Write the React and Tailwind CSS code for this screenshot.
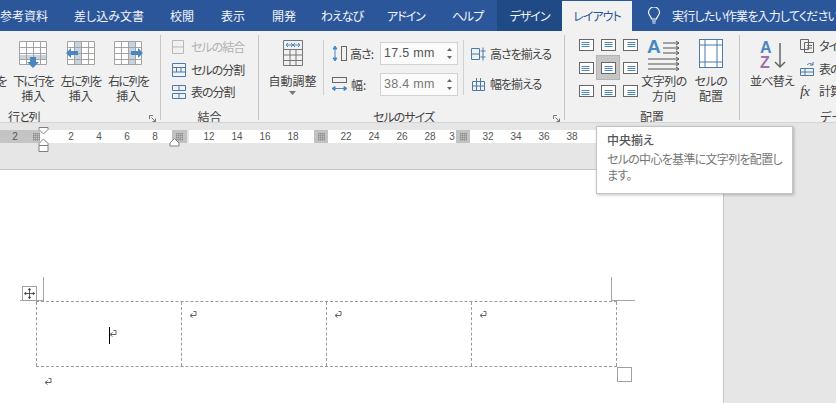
const tabs = [
  { label: '参考資料', w: 'w-[76px] -ml-[14px]' },
  { label: '差し込み文書', w: 'w-[94px]' },
  { label: '校閲', w: 'w-[52px]' },
  { label: '表示', w: 'w-[50px]' },
  { label: '開発', w: 'w-[52px]' },
  { label: 'わえなび', w: 'w-[64px] tracking-[-1px]' },
  { label: 'アドイン', w: 'w-[64px] tracking-[-1px]' },
  { label: 'ヘルプ', w: 'w-[59px] tracking-[-1px]' },
];

function TitleBar() {
  return (
    <div className="flex h-[31px] items-stretch overflow-hidden bg-[#2b579a] text-[12px] text-[#f4f6fa]">
      {tabs.map((t) => (
        <div key={t.label} className={`flex shrink-0 items-center justify-center ${t.w}`}>{t.label}</div>
      ))}
      <div className="flex w-[65px] shrink-0 items-center justify-center bg-[#1f4a85] tracking-[-1px]">デザイン</div>
      <div className="mt-px flex w-[70px] shrink-0 items-center justify-center bg-[#f1f1f1] tracking-[-1px] text-[#2b579a]">レイアウト</div>
      <svg width="14" height="18" viewBox="0 0 14 18" className="ml-[15px] mt-[7px] shrink-0" fill="none" stroke="#fff" strokeWidth="1.1">
        <path d="M4.5 12c0-2.5-3-3.500-3-6.500a5.500 5.500 0 0 1 11 0c0 3-3 4-3 6.500z" />
        <path d="M5 14h4M5.500 16h3" />
      </svg>
      <div className="ml-[11px] flex shrink-0 items-center whitespace-nowrap tracking-[-0.8px]">実行したい作業を入力してください</div>
    </div>
  );
}

function GridIcon({ shade, children }) {
  return (
    <svg width="30" height="28" viewBox="0 0 30 28" fill="none" className="shrink-0">
      <rect x="1" y="1" width="28" height="24" fill="#fff" />
      {shade}
      <path stroke="#a2a2a2" d="M1.500 1.500h27v23h-27zM1.500 7.500h27M1.500 13.500h27M1.500 19.500h27M8.500 1.500v23M15.500 1.500v23M22.500 1.500v23" />
      {children}
    </svg>
  );
}

const arrowBlue = '#4a86c0';

function BigButton({ icon, lines, className = 'w-[47px]', track = '' }) {
  return (
    <div className={`flex shrink-0 flex-col items-center ${className}`}>
      <div className="flex h-[38px] items-start justify-center pt-[5px]">{icon}</div>
      {lines.map((l, i) => (
        <div key={l} className={`h-[15px] whitespace-nowrap leading-[15px] ${i === 0 ? track : ''}`}>{l}</div>
      ))}
    </div>
  );
}

function Launcher() {
  return (
    <svg width="7" height="7" viewBox="0 0 7 7" fill="none" stroke="#777" className="absolute -bottom-[2px] right-[4px]">
      <path d="M.5 4V.5H4M2.500 2.500l4 4M6.500 3.500v3h-3" />
    </svg>
  );
}

function Group({ width, label, children, launcher, labelClass = 'justify-center' }) {
  return (
    <div className={`relative mt-[4px] flex h-[85px] shrink-0 flex-col border-r border-[#c6c6c6] ${width}`}>
      <div className="flex h-[70px] min-h-0">{children}</div>
      <div className={`-mb-[4px] mt-auto flex h-[15px] items-center whitespace-nowrap leading-[15px] ${labelClass}`}>{label}</div>
      {launcher && <Launcher />}
    </div>
  );
}

function SmallRow({ icon, text, muted }) {
  return (
    <div className={`flex h-[22.500px] items-center gap-[4px] whitespace-nowrap tracking-[-1px] ${muted ? 'text-[#b1b1b1]' : ''}`}>
      {icon}
      <span>{text}</span>
    </div>
  );
}

function CellIcon({ d, color = '#4a7ba8' }) {
  return (
    <svg width="15" height="14" viewBox="0 0 15 14" fill="none" stroke={color} className="shrink-0">
      <path d={d} />
    </svg>
  );
}

function Spin({ value, muted }) {
  return (
    <div className={`flex h-[23px] w-[78px] shrink-0 items-center justify-between border border-[#d2d2d2] bg-[#fbfbfb] pl-[3px] pr-[4px] font-['Liberation_Sans'] text-[12.500px] ${muted ? 'text-[#777]' : 'text-[#555]'}`}>
      <span className="tracking-[0.3px]">{value}</span>
      <svg width="7" height="15" viewBox="0 0 7 15" fill="#666">
        <path d="M3.500 2 6 5H1zM3.500 13 1 10h5z" />
      </svg>
    </div>
  );
}

function AlignIcon({ row, col, selected }) {
  const lines = [
    [3.500, 5.500, 7.500],
    [4.500, 6.500, 8.500],
    [5.500, 7.500, 9.500],
  ][row];
  const spans = ['M2.500 %h8', 'M3.500 %h8', 'M4.500 %h8'];
  return (
    <div className={`flex h-[23px] w-[22px] items-center justify-center ${selected ? 'bg-[#c6c6c6] outline outline-1 outline-[#b4b4b4]' : ''}`}>
      <svg width="15" height="12" viewBox="0 0 15 12" fill="none">
        <rect x=".5" y=".5" width="14" height="11" stroke="#666" fill="#fff" />
        {lines.map((y) => (
          <path key={y} stroke={arrowBlue} d={spans[col].replace('%', y)} />
        ))}
      </svg>
    </div>
  );
}

function InnerDivider() {
  return <div className="mt-[5px] h-[55px] w-px shrink-0 bg-[#d0d0d0]" />;
}

function Ribbon() {
  return (
    <div className="flex h-[92px] overflow-hidden border-b border-[#d4d4d4] bg-[#f1f1f1] text-[12px] text-[#444]">
      <Group width="w-[161px]" label={<span className="pl-[8px] tracking-[-1px]">行と列</span>} labelClass="justify-start" launcher>
        <div className="-ml-[38px] flex text-center">
          <BigButton lines={['上に行を', '挿入']} track="tracking-[-1.500px]" className="w-[47.500px]" icon={<GridIcon />} />
          <BigButton
            lines={['下に行を', '挿入']}
            track="tracking-[-1.500px]"
            className="w-[47.500px]"
            icon={
              <GridIcon shade={<rect x="1" y="15" width="28" height="5" fill="#c9d3e0" />}>
                <path d="M12 17h6v5h3l-6 6-6-6h3z" fill={arrowBlue} />
              </GridIcon>
            }
          />
          <BigButton
            lines={['左に列を', '挿入']}
            track="tracking-[-1.500px]"
            className="w-[47.500px]"
            icon={
              <GridIcon shade={<rect x="8" y="1" width="8" height="24" fill="#c9d3e0" />}>
                <path d="M0 13l5-5v3h7v4H5v3z" fill={arrowBlue} />
              </GridIcon>
            }
          />
          <BigButton
            lines={['右に列を', '挿入']}
            track="tracking-[-1.500px]"
            className="w-[47.500px]"
            icon={
              <GridIcon shade={<rect x="15" y="1" width="8" height="24" fill="#c9d3e0" />}>
                <path d="M30 13l-5-5v3h-7v4h7v3z" fill={arrowBlue} />
              </GridIcon>
            }
          />
        </div>
      </Group>

      <Group width="w-[98px]" label="結合">
        <div className="pl-[11px] pt-px">
          <SmallRow muted text="セルの結合" icon={<CellIcon color="#b8b8b8" d="M.5 .5h11v13H.5zM.5 7h11" />} />
          <SmallRow text="セルの分割" icon={<CellIcon d="M.5 .5h13v13H.5zM.5 4.500h13M.5 9h13M4.500 4.500V9M9 4.500V9" />} />
          <SmallRow text="表の分割" icon={<CellIcon d="M.5 .5h13v5H.5zM.5 8.500h13v5H.5zM7 .5v5M7 8.500v5" />} />
        </div>
      </Group>

      <Group width="w-[306px]" label={<span className="pr-[16px] tracking-[-1px]">セルのサイズ</span>} launcher>
        <div className="flex h-[70px]">
          <div className="flex h-[60px] w-[64px] shrink-0 flex-col items-center pl-[3px]">
            <div className="flex h-[38px] items-start pt-[5px]">
              <svg width="20" height="26" viewBox="0 0 20 26" fill="none" stroke="#777">
                <path d="M.5 .5h19v25H.5zM.5 9.500h19M.5 15h19M.5 20.500h19M7 9.500v16M13 9.500v16" />
                <path d="M3 5h14M3 5l2-2M3 5l2 2M17 5l-2-2M17 5l-2 2M8 3l4 4M12 3l-4 4" stroke={arrowBlue} />
              </svg>
            </div>
            <div className="h-[15px] leading-[15px]">自動調整</div>
            <svg width="7" height="4" viewBox="0 0 7 4" fill="#777" className="mt-[3px]"><path d="M0 0h7L3.500 4z" /></svg>
          </div>
          <InnerDivider />

          <div className="flex h-[61px] w-[139px] shrink-0 flex-col justify-between pl-[7px] pt-[7px]">
            <div className="flex items-center">
              <svg width="17" height="17" viewBox="0 0 17 17" fill="none" className="shrink-0">
                <path d="M4 4v9M4 1 2 4h4zM4 16l-2-3h4z" fill={arrowBlue} stroke={arrowBlue} />
                <rect x="10.500" y="1.500" width="5" height="14" stroke="#666" />
              </svg>
              <span className="ml-[2px] w-[30px] whitespace-nowrap tracking-[-1px]">高さ:</span>
              <Spin value="17.5 mm" />
            </div>
            <div className="flex items-center">
              <svg width="17" height="17" viewBox="0 0 17 17" fill="none" className="shrink-0">
                <path d="M4 12.500h9M1 12.500 4 10.500v4zM16 12.500l-3-2v4z" fill={arrowBlue} stroke={arrowBlue} />
                <rect x="1.500" y="1.500" width="14" height="5" stroke="#666" />
              </svg>
              <span className="ml-[3px] w-[29px] whitespace-nowrap">幅:</span>
              <Spin muted value="38.4 mm" />
            </div>
          </div>
          <InnerDivider />

          <div className="flex h-[60px] flex-col justify-between pb-[2px] pl-[7px] pt-[10px] tracking-[-1px]">
            <div className="flex items-center gap-[4px] whitespace-nowrap">
              <CellIcon d="M.5 1.500h8v11h-8zM.5 7h8M12 .5v13M9.500 4h5M9.500 10h5" />
              <span>高さを揃える</span>
            </div>
            <div className="flex items-center gap-[4px] whitespace-nowrap">
              <CellIcon d="M1.500 4.500h12v9h-12zM1.500 9h12M5.500 1v12M9.500 1v12" />
              <span>幅を揃える</span>
            </div>
          </div>
        </div>
      </Group>

      <Group width="w-[175px]" label="配置">
        <div className="flex pl-[10px]">
          <div className="-mt-[2px] grid h-[69px] grid-cols-[22px_22px_22px] grid-rows-[23px_23px_23px]">
            {[0, 1, 2].map((r) =>
              [0, 1, 2].map((c) => <AlignIcon key={`${r}${c}`} row={r} col={c} selected={r === 1 && c === 1} />)
            )}
          </div>
          <BigButton
            className="w-[46px]"
            track="tracking-[-0.5px]"
            lines={['文字列の', '方向']}
            icon={
              <svg width="34" height="33" viewBox="0 0 34 33" fill="none" className="-mt-[2px]">
                <text x="0" y="15" fontFamily="Liberation Sans" fontWeight="700" fontSize="19" fill={arrowBlue}>A</text>
                <path d="M16 5h16M16 10h16M16 15h16M1 21h31M1 26h31M1 31h31M29 3l3 2-3 2M29 8l3 2-3 2M29 13l3 2-3 2M29 19l3 2-3 2M29 24l3 2-3 2M29 29l3 2-3 2" stroke="#555" />
              </svg>
            }
          />
          <BigButton
            className="w-[48px]"
            track="tracking-[-0.5px]"
            lines={['セルの', '配置']}
            icon={
              <svg width="24" height="29" viewBox="0 0 24 29" fill="none" stroke="#4a7ba8" className="-mt-[1px]">
                <rect x=".5" y=".5" width="23" height="28" fill="#fff" />
                <path d="M.5 6h23M.5 23h23M6 .5v28M18 .5v28" />
              </svg>
            }
          />
        </div>
      </Group>

      <Group width="w-[100px]" label={<span className="pl-[80px]">データ</span>} labelClass="justify-start">
        <div className="flex pl-[7px]">
          <BigButton
            className="w-[50px]"
            track="tracking-[-0.8px]"
            lines={['並べ替え']}
            icon={
              <svg width="27" height="31" viewBox="0 0 27 31" fill="none" className="-mt-[1px]">
                <text x="1" y="14" fontFamily="Liberation Sans" fontWeight="700" fontSize="16" fill={arrowBlue}>A</text>
                <text x="1" y="29" fontFamily="Liberation Sans" fontWeight="700" fontSize="16" fill="#9e70ae">Z</text>
                <path d="M21 4v24M16 23l5 5 5-5" stroke="#666" strokeWidth="1.500" />
              </svg>
            }
          />
          <div className="ml-[3px] flex flex-col whitespace-nowrap">
            <SmallRow text="タイトル行" icon={<CellIcon color="#666" d="M.5 .5h8v10h-8zM4.500 3.500h9v10h-9zM7 6.500h5M7 9h5" />} />
            <SmallRow text="表の変換" icon={<CellIcon d="M.5 6.500h13v7H.5zM.5 10h13M5 6.500v7M7 3c2-2 4-2 6 0M13 0v3h-3" />} />
            <SmallRow text="計算式" icon={<span className="w-[15px] font-['Liberation_Serif'] text-[15px] italic leading-none">fx</span>} />
          </div>
        </div>
      </Group>
    </div>
  );
}

function Seg({ w, children, tone = 'bg-white' }) {
  return <div className={`flex h-full shrink-0 items-center justify-center ${w} ${tone}`}>{children}</div>;
}

function Nums({ list, tone }) {
  return list.map((n, i) => (
    <Seg key={i} w="w-[28px]" tone={tone}>{n}</Seg>
  ));
}

function Marker({ w = 'w-[14px]', tone = 'bg-[#c2c2c2]' }) {
  return (
    <Seg w={w} tone={tone}>
      <svg width="7" height="8" viewBox="0 0 7 8" stroke="#808080" strokeWidth=".5">
        <path d="M0 .5h7M0 2.500h7M0 4.500h7M0 6.500h7M.5 0v8M2.500 0v8M4.500 0v8M6.500 0v8" />
      </svg>
    </Seg>
  );
}

function Ruler() {
  return (
    <div className="relative h-[46px] bg-[#e6e6e6] pt-[7px]">
      <div className="flex h-[13px] items-center font-['Liberation_Sans'] text-[10px] text-[#555]">
        <Seg w="w-[32px]" tone="bg-[#c4c4c4]"><span className="pr-[2px]">2</span></Seg>
        <Marker w="w-[8px]" tone="bg-[#c4c4c4]" />
        <Seg w="w-[17px]" />
        <Nums list={[2, 4, 6, 8]} />
        <Seg w="w-[3px]" />
        <Marker w="w-[15px]" />
        <Seg w="w-[2px]" tone="bg-[#e6e6e6]" />
        <Seg w="w-[6px]" />
        <Nums list={[12, 14, 16, 18]} />
        <Seg w="w-[7px]" />
        <Marker />
        <Seg w="w-[4px]" />
        <Nums list={[22, 24, 26, 28]} />
        <Seg w="w-[12px]"><span className="pl-[4px]">3</span></Seg>
        <Marker />
        <Seg w="w-[4px]" />
        <Nums list={[32, 34, 36, 38]} />
        <Seg w="w-[137px]" />
      </div>
      <svg width="12" height="26" viewBox="0 0 12 26" fill="#fff" stroke="#808080" className="absolute left-[38px] top-[4px]">
        <path d="M1 .5h9v2L5.500 7 1 2.500z" />
        <path d="M5.500 12 10 16.500v2H1v-2zM1 18.500h9v6H1z" />
      </svg>
      <svg width="11" height="9" viewBox="0 0 11 9" fill="#fff" stroke="#808080" className="absolute left-[169px] top-[15px]">
        <path d="M5.500 .5 10 5v3H1V5z" />
      </svg>
    </div>
  );
}

function ReturnMark({ className = '' }) {
  return (
    <svg width="8" height="8" viewBox="0 0 8 8" fill="none" stroke="#666" className={className}>
      <path d="M7 .5V4.500H1.500M3.500 2.500l-2.500 2 2.500 2" />
      <path d="M4.500 .5H7" />
    </svg>
  );
}

function Tooltip() {
  return (
    <div className="absolute left-[596px] top-[126px] h-[68px] w-[197px] whitespace-nowrap border border-[#c4c4c4] bg-white px-[10px] pt-[5px] text-[12px] shadow-[1px_1px_3px_rgba(0,0,0,0.25)]">
      <div className="font-medium leading-[16px] text-[#555]">中央揃え</div>
      <div className="mt-[3px] leading-[16px] tracking-[-0.7px] text-[#777]">
        セルの中心を基準に文字列を配置し
        <br />
        ます。
      </div>
    </div>
  );
}

function Page() {
  return (
    <div className="flex h-[234px] bg-[#e6e6e6]">
      <div className="relative h-full w-[724px] shrink-0 border-t border-r border-[#c6c6c6] bg-white">
        <div className="absolute left-[20px] top-[107px] h-[24px] w-[24px] border-r border-b border-[#a6a6a6]" />
        <div className="absolute left-[611px] top-[107px] h-[24px] w-[24px] border-l border-b border-[#a6a6a6]" />

        <div className="absolute left-[22px] top-[116px] flex h-[15px] w-[15px] items-center justify-center border border-[#a0a0a0] bg-white">
          <svg width="11" height="11" viewBox="0 0 11 11" fill="#444" stroke="#444" strokeWidth=".9">
            <path d="M5.500 1v9M1 5.500h9" />
            <path d="M5.500 0 4 2h3zM5.500 11 4 9h3zM0 5.500 2 4v3zM11 5.500 9 4v3z" strokeWidth=".3" />
          </svg>
        </div>

        <div className="ml-[36px] pt-[131px]">
          <div className="grid h-[66px] w-[581px] grid-cols-[145px_145px_145px_146px] border-t border-b border-dashed border-[#9a9a9a]">
            <div className="relative flex items-center justify-center border-l border-dashed border-[#9a9a9a] pl-[8px]">
              <div className="absolute left-[72px] top-[25px] h-[17px] w-px bg-black" />
              <ReturnMark />
            </div>
            <div className="border-l border-dashed border-[#9a9a9a] pl-[7px] pt-[9px]"><ReturnMark /></div>
            <div className="border-l border-dashed border-[#9a9a9a] pl-[7px] pt-[9px]"><ReturnMark /></div>
            <div className="border-x border-dashed border-[#9a9a9a] pl-[7px] pt-[9px]"><ReturnMark /></div>
          </div>
          <div className="pl-[8px] pt-[11px]"><ReturnMark /></div>
        </div>

        <div className="absolute left-[617px] top-[197px] h-[15px] w-[15px] border border-[#a0a0a0] bg-white" />
      </div>
    </div>
  );
}

export default function App() {
  return (
    <div className="relative h-[403px] w-[836px] overflow-hidden bg-[#e6e6e6] font-['Noto_Sans_CJK_JP',sans-serif] [font-feature-settings:'palt']">
      <TitleBar />
      <Ribbon />
      <Ruler />
      <Page />
      <Tooltip />
    </div>
  );
}
